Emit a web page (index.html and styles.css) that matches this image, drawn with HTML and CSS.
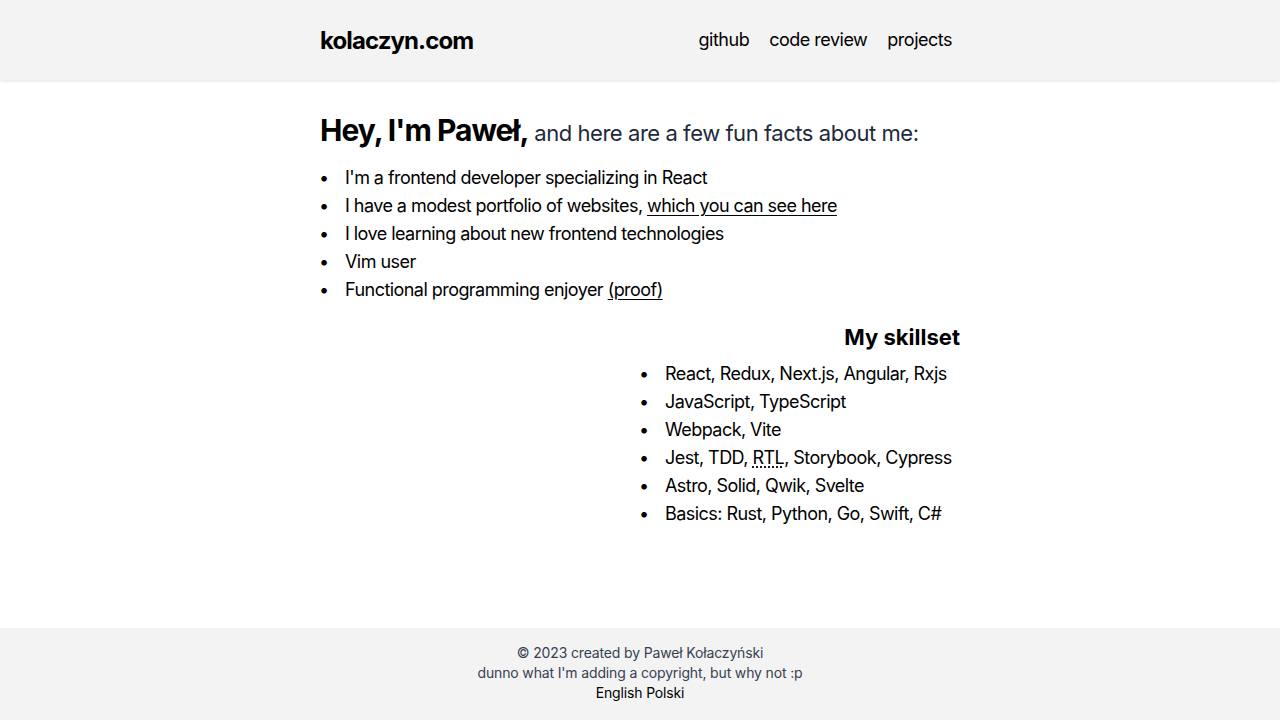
FILE: index.html
```html
<!DOCTYPE html>
<html lang="en">
<head>
<meta charset="utf-8">
<title>kolaczyn.com</title>
<link rel="stylesheet" href="styles.css">
</head>
<body>
<div class="page">
  <header class="header">
    <div class="container header-inner">
      <a class="logo" href="#">kolaczyn.com</a>
      <nav class="nav">
        <a href="#">github</a>
        <a href="#">code review</a>
        <a href="#">projects</a>
      </nav>
    </div>
  </header>
  <main class="main container">
    <h1 class="intro"><span class="intro-name">Hey, I'm Paweł,</span><span class="intro-rest"> and here are a few fun facts about me:</span></h1>
    <ul class="list">
      <li><span>I'm a frontend developer specializing in React</span></li>
      <li><span>I have a modest portfolio of websites, <a href="#">which you can see here</a></span></li>
      <li><span>I love learning about new frontend technologies</span></li>
      <li><span>Vim user</span></li>
      <li><span>Functional programming enjoyer <a href="#">(proof)</a></span></li>
    </ul>
    <section class="skills">
      <h2 class="skills-title">My skillset</h2>
      <ul class="list">
        <li><span>React, Redux, Next.js, Angular, Rxjs</span></li>
        <li><span>JavaScript, TypeScript</span></li>
        <li><span>Webpack, Vite</span></li>
        <li><span>Jest, TDD, <abbr title="React Testing Library">RTL</abbr>, Storybook, Cypress</span></li>
        <li><span>Astro, Solid, Qwik, Svelte</span></li>
        <li><span>Basics: Rust, Python, Go, Swift, C#</span></li>
      </ul>
    </section>
  </main>
  <footer class="footer">
    <p class="muted">© 2023 created by Paweł Kołaczyński</p>
    <p class="muted">dunno what I'm adding a copyright, but why not :p</p>
    <p class="langs"><a href="#">English</a> <a href="#">Polski</a></p>
  </footer>
</div>
</body>
</html>
```
FILE: styles.css
```css
* { box-sizing: border-box; }
html, body { margin: 0; padding: 0; }
body {
  font-family: Inter, "Noto Sans", sans-serif;
  color: #000;
  background: #fff;
}
a { color: inherit; }
.page {
  min-height: 720px;
  display: flex;
  flex-direction: column;
}
.container {
  width: 640px;
  margin: 0 auto;
}
.header {
  background: #f3f3f3;
  height: 80px;
  box-shadow: 0 1px 3px rgba(0,0,0,0.12);
  display: flex;
  align-items: center;
}
.header-inner {
  display: flex;
  justify-content: space-between;
  align-items: center;
  padding-right: 8px;
}
.logo {
  font-size: 24px;
  font-weight: 700;
  text-decoration: none;
  letter-spacing: -0.9px;
}
.nav {
  display: flex;
  gap: 20px;
  font-size: 18px;
  letter-spacing: -0.5px;
  margin-top: -2px;
}
.nav a { text-decoration: none; }
.main {
  flex: 1;
  padding-top: 32px;
}
.intro {
  margin: 0 0 13px;
  line-height: 36px;
  font-weight: 400;
}
.intro-name {
  font-size: 30px;
  font-weight: 700;
  letter-spacing: -1px;
}
.intro-rest {
  font-size: 22px;
  color: #1e293b;
  letter-spacing: -0.45px;
}
.list {
  list-style: none;
  margin: 0;
  padding: 0;
  font-size: 18px;
  line-height: 28px;
  letter-spacing: -0.55px;
}
.list li {
  display: grid;
  grid-template-columns: 25px auto;
  white-space: nowrap;
}
.list li::before {
  content: "•";
  margin-left: -1px;
}
.list a { text-underline-offset: 3px; }
abbr {
  text-decoration: underline dotted;
  text-underline-offset: 3px;
}
.skills {
  margin-left: 320px;
  margin-top: 17px;
}
.skills-title {
  margin: 0 0 7px;
  text-align: right;
  font-size: 22px;
  line-height: 32px;
  font-weight: 700;
  letter-spacing: 0;
}
.footer {
  background: #f3f3f3;
  height: 92px;
  padding-top: 15px;
  text-align: center;
  font-size: 14px;
  line-height: 20px;
  letter-spacing: -0.15px;
}
.footer p { margin: 0; }
.muted { color: #374151; }
.langs a { text-decoration: none; color: #000; }
```
